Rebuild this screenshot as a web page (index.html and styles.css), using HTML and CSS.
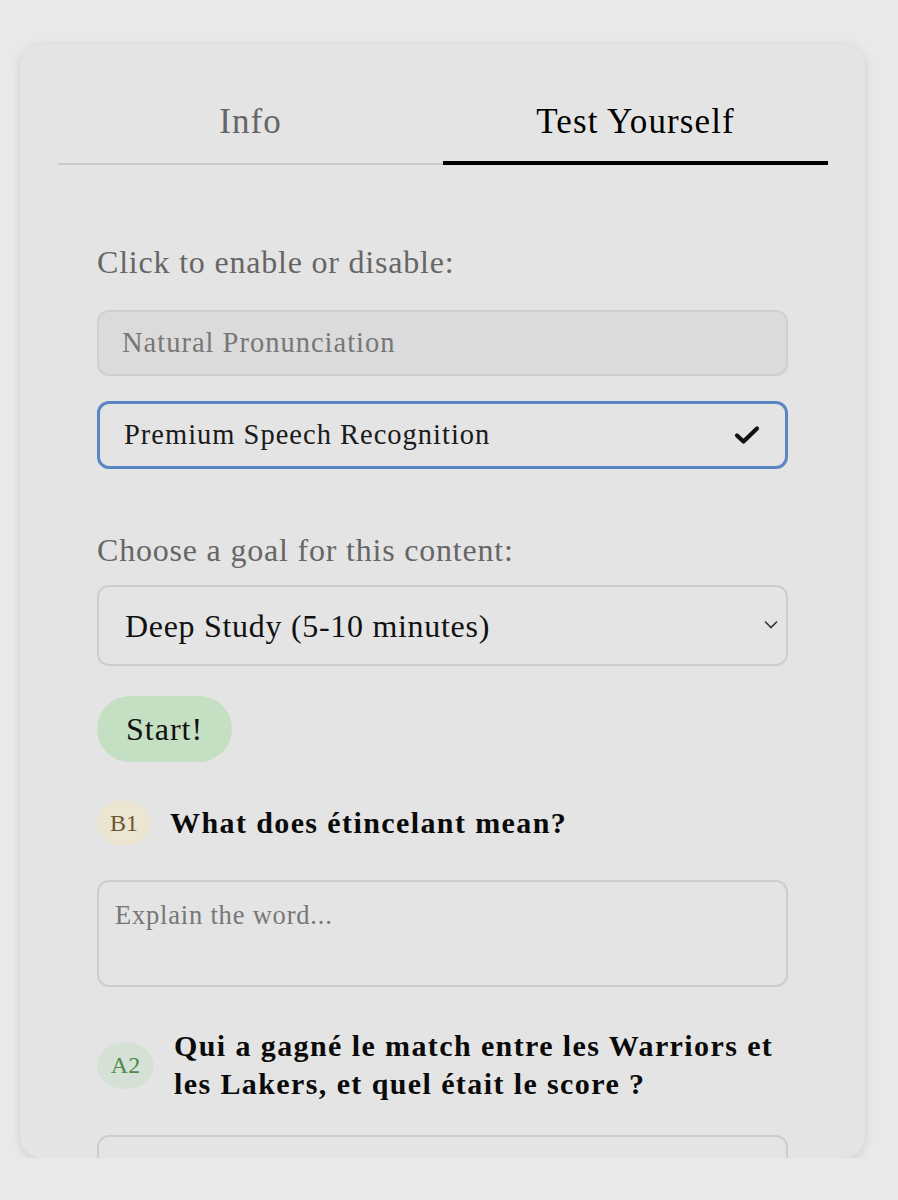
FILE: index.html
```html
<!DOCTYPE html>
<html lang="en">
<head>
    <meta charset="UTF-8">
    <meta name="viewport" content="width=device-width, initial-scale=1.0">
    <title>Test Yourself</title>
    <link rel="stylesheet" href="styles.css">
</head>
<body>
    <div class="card">
        <div class="tabs">
            <div class="tab">Info</div>
            <div class="tab active">Test Yourself</div>
        </div>

        <div class="content">
            <p class="label label-first">Click to enable or disable:</p>

            <div class="toggle disabled">Natural Pronunciation</div>
            <div class="toggle enabled">
                <span>Premium Speech Recognition</span>
                <svg class="check" width="26" height="20" viewBox="0 0 26 20">
                    <path d="M3 10.5 L9.5 16.5 L23 3.5" fill="none" stroke="#111" stroke-width="4.2" stroke-linecap="round" stroke-linejoin="round"/>
                </svg>
            </div>

            <p class="label label-goal">Choose a goal for this content:</p>

            <div class="select-wrap">
                <select class="goal-select">
                    <option>Deep Study (5-10 minutes)</option>
                    <option>Quick Review (1-2 minutes)</option>
                </select>
                <svg class="chevron" width="14" height="9" viewBox="0 0 14 9">
                    <path d="M1 1.5 L7 7.5 L13 1.5" fill="none" stroke="#333" stroke-width="1.6"/>
                </svg>
            </div>

            <button class="start-button">Start!</button>

            <!-- Questions -->
            <div class="question q-first">
                <span class="level level-b1">B1</span>
                <h3>What does étincelant mean?</h3>
            </div>
            <textarea class="answer" placeholder="Explain the word..."></textarea>

            <div class="question q-second">
                <span class="level level-a2">A2</span>
                <h3>Qui a gagné le match entre les Warriors et les Lakers, et quel était le score ?</h3>
            </div>
            <textarea class="answer"></textarea>
        </div>
    </div>
</body>
</html>
```

FILE: styles.css
```css
body {
    font-family: "Liberation Serif", "DejaVu Serif", serif;
    background-color: #e9e9e9;
    margin: 0;
    padding: 44px 33px 0 20px;
    color: #111;
}

.card {
    background-color: #e4e4e4;
    border-radius: 22px;
    box-shadow: 0 2px 10px rgba(0, 0, 0, 0.12);
    height: 1114px;
    overflow: hidden;
    padding: 0 37px 0 38px;
    box-sizing: border-box;
}

.tabs {
    display: grid;
    grid-template-columns: 1fr 1fr;
    align-items: end;
    margin-top: 58px;
}

.tab {
    text-align: center;
    font-size: 35px;
    letter-spacing: 1.1px;
    line-height: 40px;
    color: #666;
    padding-bottom: 21px;
    border-bottom: 2px solid #cbcbcb;
}

.tab.active {
    color: #000;
    padding-bottom: 19px;
    border-bottom: 4px solid #000;
}

.content {
    padding: 0 40px 0 39px;
}

.label {
    font-size: 32px;
    letter-spacing: 0.8px;
    line-height: 36px;
    color: #666;
    margin: 0;
}

.label-first {
    margin-top: 79px;
    margin-bottom: 30px;
}

.label-goal {
    margin-top: 63px;
    margin-bottom: 17px;
}

.toggle {
    height: 66px;
    box-sizing: border-box;
    border-radius: 12px;
    display: flex;
    align-items: center;
    justify-content: space-between;
    font-size: 28.5px;
    letter-spacing: 1px;
}

.toggle.disabled {
    background-color: #dbdbdb;
    border: 2px solid #cfcfcf;
    color: #777;
    padding: 0 23px;
}

.toggle.enabled {
    height: 68px;
    margin-top: 25px;
    border: 3px solid #5b86c6;
    color: #1a1a1a;
    padding: 0 25px 0 24px;
}

.select-wrap {
    position: relative;
}

.goal-select {
    appearance: none;
    -webkit-appearance: none;
    width: 100%;
    height: 81px;
    background-color: #e4e4e4;
    border: 2px solid #cdcdcd;
    border-radius: 12px;
    font-family: inherit;
    font-size: 32px;
    letter-spacing: 0.7px;
    color: #111;
    padding: 0 26px;
    outline: none;
}

.chevron {
    position: absolute;
    right: 10px;
    top: 35px;
    pointer-events: none;
}

.start-button {
    display: block;
    margin-top: 30px;
    background-color: #c5dfc2;
    border: none;
    border-radius: 33px;
    height: 66px;
    padding: 0 29px;
    font-family: inherit;
    font-size: 32px;
    letter-spacing: 1px;
    color: #111;
    cursor: pointer;
}

.question {
    display: flex;
    align-items: center;
    gap: 19px;
}

.question h3 {
    margin: 0;
    font-size: 30px;
    letter-spacing: 1.4px;
    line-height: 38px;
    font-weight: bold;
    color: #0a0a0a;
}

.q-first {
    margin-top: 38px;
    margin-bottom: 34px;
}

.q-second {
    margin-top: 40px;
    margin-bottom: 32px;
    gap: 20px;
}

.level {
    flex-shrink: 0;
    width: 54px;
    height: 46px;
    border-radius: 50%;
    display: flex;
    align-items: center;
    justify-content: center;
    font-size: 24px;
}

.level-b1 {
    background-color: #ebe5d2;
    color: #6a5634;
}

.level-a2 {
    width: 57px;
    height: 47px;
    background-color: #d6e1d6;
    color: #4e8a4e;
}

.answer {
    display: block;
    width: 100%;
    height: 107px;
    box-sizing: border-box;
    background-color: #e4e4e4;
    border: 2px solid #cdcdcd;
    border-radius: 12px;
    padding: 18px 16px;
    font-family: inherit;
    font-size: 26.5px;
    letter-spacing: 0.8px;
    color: #111;
    resize: none;
    outline: none;
}

.answer::placeholder {
    color: #777;
}
```
